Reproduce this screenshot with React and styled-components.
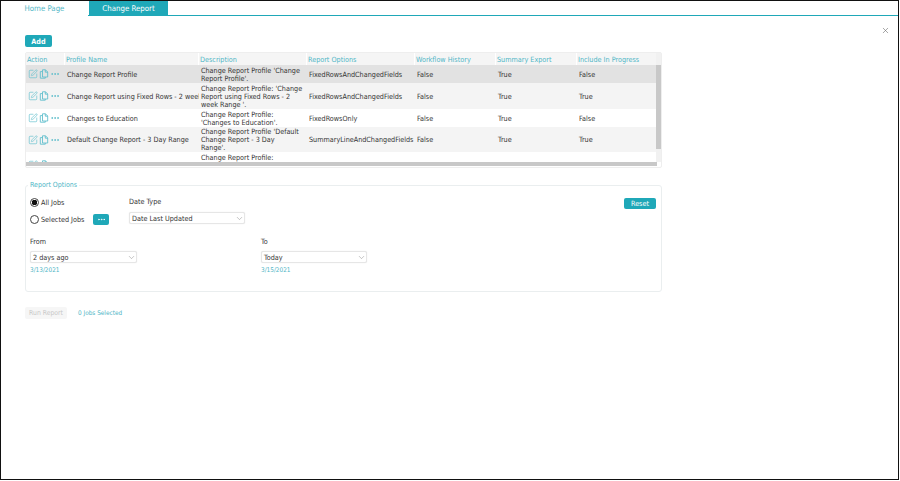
import styled, { createGlobalStyle } from 'styled-components'
import { SquarePen, Ellipsis, ChevronDown, X } from 'lucide-react'

const teal = '#1fa8b8'
const tealText = '#4fb6c6'

const GlobalStyle = createGlobalStyle`
  html, body {
    margin: 0;
    background: #fff;
  }
  * {
    box-sizing: border-box;
  }
  body {
    font-family: 'DejaVu Sans Condensed', 'DejaVu Sans', sans-serif;
    font-size: 7.2px;
    color: #333;
  }
`

const Page = styled.div`
  position: relative;
  width: 899px;
  height: 480px;
  border: 1px solid #111;
  overflow: hidden;
`

const Tabs = styled.div`
  display: flex;
  height: 15px;
  border-bottom: 1px solid ${teal};
`

const Tab = styled.div`
  width: ${props => props.width}px;
  height: 15px;
  margin-right: 1px;
  display: flex;
  align-items: center;
  justify-content: center;
  font-size: 7.8px;
  color: ${props => (props.active ? '#fff' : tealText)};
  background: ${props => (props.active ? teal : '#fff')};
`

const CloseButton = styled.div`
  position: absolute;
  top: 25px;
  right: 8px;
  color: #666;
  line-height: 0;
`

const Content = styled.div`
  padding: 19px 0 0 24px;
  width: 662px;
`

const Button = styled.div`
  display: flex;
  align-items: center;
  justify-content: center;
  flex: none;
  width: ${props => props.width}px;
  height: ${props => props.height}px;
  background: ${teal};
  color: #fff;
  border-radius: 2px;
  font-weight: ${props => (props.bold ? 700 : 400)};
`

const Grid = styled.div`
  position: relative;
  margin-top: 5px;
  width: 637px;
  border: 1px solid #eee;
  border-radius: 2px;
`

const GridHead = styled.div`
  display: flex;
  height: 12px;
  background: #f5f5f5;
`

const HeadCell = styled.div`
  width: ${props => props.width}px;
  flex: none;
  display: flex;
  align-items: center;
  padding-left: 1px;
  border-right: 1px solid #fff;
  color: ${tealText};
  white-space: nowrap;
  overflow: hidden;
`

const GridBody = styled.div`
  height: 97px;
  width: 631px;
  overflow: hidden;
`

const GridFoot = styled.div`
  height: 5px;
`

const VerticalTrack = styled.div`
  position: absolute;
  top: 0;
  right: 0;
  width: 5px;
  height: 109px;
  background: #f1f1f1;
`

const VerticalThumb = styled.div`
  position: absolute;
  top: 12px;
  right: 0;
  width: 5px;
  height: 84px;
  background: #c8c8c8;
`

const HorizontalThumb = styled.div`
  position: absolute;
  left: 0;
  bottom: 1px;
  width: 631px;
  height: 4px;
  background: #c8c8c8;
`

const Row = styled.div`
  display: flex;
  align-items: center;
  flex: none;
  height: ${props => props.height}px;
  padding-top: 1px;
  background: ${props => props.bg};
`

const Cell = styled.div`
  width: ${props => props.width}px;
  flex: none;
  padding-left: 2px;
  line-height: 8px;
  white-space: nowrap;
  overflow: hidden;
`

const Actions = styled.div`
  width: 39px;
  flex: none;
  display: flex;
  align-items: center;
  gap: 1px;
  padding: 0 0 1px 2px;
  color: #62c0cd;
`

const Fieldset = styled.fieldset`
  margin: 13px 0 0;
  padding: 9px 5px 0 4px;
  width: 637px;
  height: 111px;
  border: 1px solid #eaeeef;
  border-radius: 3px;
`

const Legend = styled.legend`
  margin-left: -2px;
  padding: 0 2px;
  color: ${tealText};
  font-size: 7px;
  line-height: 8px;
`

const TopRow = styled.div`
  display: flex;
  justify-content: space-between;
`

const TopLeft = styled.div`
  display: flex;
`

const JobChoice = styled.div`
  display: flex;
  flex-direction: column;
  gap: 8px;
  width: 99px;
`

const RadioRow = styled.label`
  display: flex;
  align-items: center;
  gap: 2px;
  height: 9px;
`

const RadioMark = styled.span`
  display: block;
  width: 9px;
  height: 9px;
  border-radius: 50%;
  border: 1px solid #444;
  background: ${props => (props.checked ? 'radial-gradient(circle, #111 0 2.6px, #fff 3px)' : '#fff')};
`

const DotsButton = styled(Button)`
  margin-left: 7px;
`

const Field = styled.div`
  width: ${props => props.width}px;
`

const FieldLabel = styled.div`
  height: 8px;
  line-height: 8px;
  margin-bottom: ${props => props.gap}px;
`

const Select = styled.div`
  display: flex;
  align-items: center;
  justify-content: space-between;
  width: ${props => props.width}px;
  height: 12px;
  padding: 0 0 0 2px;
  background: #fff;
  border: 1px solid #e6e6e6;
  border-radius: 2px;
  box-shadow: 0 0 1px #ddd;
  color: #666;
`

const SelectText = styled.span`
  color: #333;
`

const DateRow = styled.div`
  display: flex;
  margin-top: 14px;
`

const DateText = styled.div`
  margin-top: 3px;
  color: ${tealText};
  font-size: 6.4px;
  line-height: 8px;
`

const Footer = styled.div`
  display: flex;
  align-items: center;
  gap: 11px;
  margin-top: 15px;
`

const RunButton = styled.div`
  display: flex;
  align-items: center;
  justify-content: center;
  width: 42px;
  height: 12px;
  background: #f6f6f6;
  color: #c8c8c8;
  font-size: 6.8px;
  border-radius: 2px;
`

const Selected = styled.div`
  color: ${tealText};
  font-size: 6.4px;
`

const columns = [
  { name: 'Action', width: 39 },
  { name: 'Profile Name', width: 134 },
  { name: 'Description', width: 108 },
  { name: 'Report Options', width: 108 },
  { name: 'Workflow History', width: 81 },
  { name: 'Summary Export', width: 81 },
  { name: 'Include In Progress', width: 81 },
]

const rows = [
  {
    name: 'Change Report Profile',
    desc: ["Change Report Profile 'Change", "Report Profile'."],
    options: 'FixedRowsAndChangedFields',
    history: 'False',
    summary: 'True',
    progress: 'False',
    height: 18,
    bg: '#e2e2e2',
  },
  {
    name: 'Change Report using Fixed Rows - 2 week Range',
    desc: ["Change Report Profile: 'Change", 'Report using Fixed Rows - 2', "week Range '."],
    options: 'FixedRowsAndChangedFields',
    history: 'False',
    summary: 'True',
    progress: 'True',
    height: 26,
    bg: '#f4f4f4',
  },
  {
    name: 'Changes to Education',
    desc: ['Change Report Profile:', "'Changes to Education'."],
    options: 'FixedRowsOnly',
    history: 'False',
    summary: 'True',
    progress: 'False',
    height: 18,
    bg: '#fff',
  },
  {
    name: 'Default Change Report - 3 Day Range',
    desc: ["Change Report Profile 'Default", 'Change Report - 3 Day', "Range'."],
    options: 'SummaryLineAndChangedFields',
    history: 'False',
    summary: 'True',
    progress: 'True',
    height: 25,
    bg: '#f4f4f4',
  },
  {
    name: '',
    desc: ['Change Report Profile:', "'Change Report", "Profile'."],
    options: '',
    history: '',
    summary: '',
    progress: '',
    height: 26,
    bg: '#fff',
  },
]

const CopyIcon = () => (
  <svg width="10" height="10" viewBox="0 0 10 10" fill="none" stroke="currentColor" strokeWidth="0.9">
    <path d="M3.5 0.8h3l2.2 2.2v5h-5.2z" />
    <path d="M6.3 0.8v2.4h2.4" />
    <path d="M3.5 2.6H1.3v6.6h5V8" />
  </svg>
)

const App = () => (
  <>
    <GlobalStyle />
    <Page>
      <Tabs>
        <Tab width={87}>Home Page</Tab>
        <Tab width={79} active>Change Report</Tab>
      </Tabs>
      <CloseButton>
        <X size={9} strokeWidth={1.5} />
      </CloseButton>
      <Content>
        <Button width={27} height={12} bold>Add</Button>
        <Grid>
          <VerticalTrack />
          <VerticalThumb />
          <HorizontalThumb />
          <GridHead>
            {columns.map(col => (
              <HeadCell key={col.name} width={col.width}>{col.name}</HeadCell>
            ))}
          </GridHead>
          <GridBody>
            {rows.map((row, i) => (
              <Row key={i} height={row.height} bg={row.bg}>
                <Actions>
                  <SquarePen size={10} strokeWidth={1.6} />
                  <CopyIcon />
                  <Ellipsis size={10} strokeWidth={2.4} />
                </Actions>
                <Cell width={134}>{row.name}</Cell>
                <Cell width={108}>
                  {row.desc.map(line => <div key={line}>{line}</div>)}
                </Cell>
                <Cell width={108}>{row.options}</Cell>
                <Cell width={81}>{row.history}</Cell>
                <Cell width={81}>{row.summary}</Cell>
                <Cell width={81}>{row.progress}</Cell>
              </Row>
            ))}
          </GridBody>
          <GridFoot />
        </Grid>
        <Fieldset>
          <Legend>Report Options</Legend>
          <TopRow>
            <TopLeft>
              <JobChoice>
                <RadioRow><RadioMark checked />All Jobs</RadioRow>
                <RadioRow>
                  <RadioMark />Selected Jobs
                  <DotsButton width={16} height={11}>
                    <Ellipsis size={9} strokeWidth={2} />
                  </DotsButton>
                </RadioRow>
              </JobChoice>
              <Field width={120}>
                <FieldLabel gap={6}>Date Type</FieldLabel>
                <Select width={116}>
                  <SelectText>Date Last Updated</SelectText>
                  <ChevronDown size={9} strokeWidth={1} />
                </Select>
              </Field>
            </TopLeft>
            <Button width={32} height={11}>Reset</Button>
          </TopRow>
          <DateRow>
            <Field width={231}>
              <FieldLabel gap={5}>From</FieldLabel>
              <Select width={107}>
                <SelectText>2 days ago</SelectText>
                <ChevronDown size={9} strokeWidth={1} />
              </Select>
              <DateText>3/13/2021</DateText>
            </Field>
            <Field width={120}>
              <FieldLabel gap={5}>To</FieldLabel>
              <Select width={106}>
                <SelectText>Today</SelectText>
                <ChevronDown size={9} strokeWidth={1} />
              </Select>
              <DateText>3/15/2021</DateText>
            </Field>
          </DateRow>
        </Fieldset>
        <Footer>
          <RunButton>Run Report</RunButton>
          <Selected>0 Jobs Selected</Selected>
        </Footer>
      </Content>
    </Page>
  </>
)

export default App
